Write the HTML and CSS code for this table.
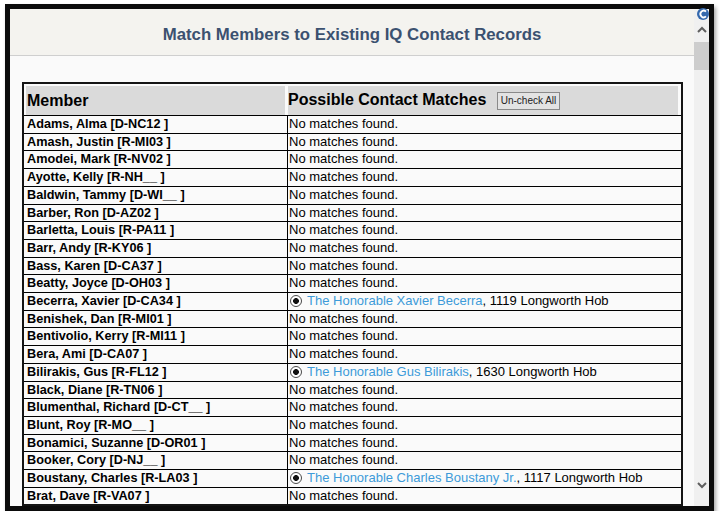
FILE: index.html
```html
<!DOCTYPE html>
<html>
<head>
<meta charset="utf-8">
<title>Match Members</title>
<link rel="stylesheet" href="styles.css">
</head>
<body>
<div class="dialog">
  <div class="viewport">
    <div class="content">
      <div class="dlg-header"><h1 class="dlg-title">Match Members to Existing IQ Contact Records</h1></div>
      <div class="dlg-body">
        <table class="matches">
          <colgroup><col class="col-member"><col class="col-match"></colgroup>
          <thead>
            <tr>
              <th class="th-member">Member</th>
              <th class="th-match">Possible Contact Matches <button class="uncheck">Un-check All</button></th>
            </tr>
          </thead>
          <tbody>
            <tr><td class="member">Adams, Alma [D-NC12 ]</td><td class="match">No matches found.</td></tr>
            <tr><td class="member">Amash, Justin [R-MI03 ]</td><td class="match">No matches found.</td></tr>
            <tr><td class="member">Amodei, Mark [R-NV02 ]</td><td class="match">No matches found.</td></tr>
            <tr><td class="member">Ayotte, Kelly [R-NH__ ]</td><td class="match">No matches found.</td></tr>
            <tr><td class="member">Baldwin, Tammy [D-WI__ ]</td><td class="match">No matches found.</td></tr>
            <tr><td class="member">Barber, Ron [D-AZ02 ]</td><td class="match">No matches found.</td></tr>
            <tr><td class="member">Barletta, Louis [R-PA11 ]</td><td class="match">No matches found.</td></tr>
            <tr><td class="member">Barr, Andy [R-KY06 ]</td><td class="match">No matches found.</td></tr>
            <tr><td class="member">Bass, Karen [D-CA37 ]</td><td class="match">No matches found.</td></tr>
            <tr><td class="member">Beatty, Joyce [D-OH03 ]</td><td class="match">No matches found.</td></tr>
            <tr><td class="member">Becerra, Xavier [D-CA34 ]</td><td class="match"><span class="radio"></span><a class="contact" href="#">The Honorable Xavier Becerra</a>, 1119 Longworth Hob</td></tr>
            <tr><td class="member">Benishek, Dan [R-MI01 ]</td><td class="match">No matches found.</td></tr>
            <tr><td class="member">Bentivolio, Kerry [R-MI11 ]</td><td class="match">No matches found.</td></tr>
            <tr><td class="member">Bera, Ami [D-CA07 ]</td><td class="match">No matches found.</td></tr>
            <tr><td class="member">Bilirakis, Gus [R-FL12 ]</td><td class="match"><span class="radio"></span><a class="contact" href="#">The Honorable Gus Bilirakis</a>, 1630 Longworth Hob</td></tr>
            <tr><td class="member">Black, Diane [R-TN06 ]</td><td class="match">No matches found.</td></tr>
            <tr><td class="member">Blumenthal, Richard [D-CT__ ]</td><td class="match">No matches found.</td></tr>
            <tr><td class="member">Blunt, Roy [R-MO__ ]</td><td class="match">No matches found.</td></tr>
            <tr><td class="member">Bonamici, Suzanne [D-OR01 ]</td><td class="match">No matches found.</td></tr>
            <tr><td class="member">Booker, Cory [D-NJ__ ]</td><td class="match">No matches found.</td></tr>
            <tr><td class="member">Boustany, Charles [R-LA03 ]</td><td class="match"><span class="radio"></span><a class="contact" href="#">The Honorable Charles Boustany Jr.</a>, 1117 Longworth Hob</td></tr>
            <tr><td class="member">Brat, Dave [R-VA07 ]</td><td class="match">No matches found.</td></tr>
          </tbody>
        </table>
      </div>
    </div>
    <div class="scrollbar">
      <div class="sb-btn sb-up"><svg width="10" height="7" viewBox="0 0 10 7"><polyline points="1,6 5,2 9,6" fill="none" stroke="#5f5f5f" stroke-width="2"/></svg></div>
      <div class="sb-track"><div class="sb-thumb"></div></div>
      <div class="sb-btn sb-down"><svg width="10" height="7" viewBox="0 0 10 7"><polyline points="1,1 5,5 9,1" fill="none" stroke="#5f5f5f" stroke-width="2"/></svg></div>
    </div>
  </div>
  <svg class="close-icon" width="14" height="14" viewBox="0 0 14 14"><circle cx="7" cy="7" r="6" fill="#3569ad"/><path d="M10 4.6 A3.3 3.3 0 1 0 10 9.4" fill="none" stroke="#ffffff" stroke-width="1.8"/></svg>
</div>
</body>
</html>
```

FILE: styles.css
```css
html, body {
  margin: 0;
  padding: 0;
  background: #ffffff;
}

.dialog {
  position: relative;
  box-sizing: border-box;
  width: 709px;
  height: 507px;
  margin: 4px 0 0 5px;
  border: 5px solid #0b0b0b;
  box-shadow: 2px 3px 4px rgba(0, 0, 0, 0.35);
  background: #fafafa;
}

.viewport {
  display: flex;
  height: 100%;
  overflow: hidden;
}

.content {
  flex: 1;
  min-width: 0;
  overflow: hidden;
  background: #fafafa;
}

.dlg-header {
  height: 46px;
  background: #f4f3ef;
  border-bottom: 1px solid #cfcfcf;
  display: flex;
  align-items: center;
  justify-content: center;
}

.dlg-title {
  margin: 5px 0 0 0;
  font-family: "Liberation Sans", Arial, sans-serif;
  font-size: 16.8px;
  font-weight: bold;
  color: #3b5170;
}

.dlg-body {
  padding: 26px 11px 0 12px;
}

.matches {
  width: 661px;
  table-layout: fixed;
  border-collapse: separate;
  border-spacing: 0;
  border: 2px solid #141414;
  background: #fafafa;
  font-family: "Liberation Sans", Arial, sans-serif;
  color: #000;
}

.col-member { width: 263px; }
.col-match { width: 394px; }

.matches th {
  height: 29px;
  padding: 0;
  background: #dadada;
  border-top: 2px solid #fafafa;
  text-align: left;
  font-size: 16px;
  font-weight: bold;
  white-space: nowrap;
  vertical-align: middle;
}

.th-member {
  border-left: 2px solid #fafafa;
  border-right: 2px solid #fafafa;
  padding-left: 1px !important;
}

.th-match {
  border-left: 1px solid #fafafa;
  border-right: 3px solid #fafafa;
}

.uncheck {
  margin-left: 6px;
  vertical-align: 1px;
  height: 18px;
  padding: 0 3px;
  font-family: "Liberation Sans", Arial, sans-serif;
  font-size: 10px;
  font-weight: normal;
  color: #222;
  background: #e3e3e3;
  border: 1px solid #8a8a8a;
  border-radius: 0;
}

.matches td {
  border-top: 1px solid #000;
  padding: 0;
  height: 16.7px;
  line-height: 16.7px;
  font-size: 13px;
  white-space: nowrap;
  overflow: hidden;
}

.member {
  font-weight: bold;
  font-size: 12.7px !important;
  padding-left: 3px !important;
}

.match {
  border-left: 1px solid #000;
  padding-left: 1px !important;
}

.radio {
  display: inline-block;
  box-sizing: border-box;
  width: 12px;
  height: 12px;
  margin: 0 5px 0 1px;
  vertical-align: -2px;
  border: 1px solid #4a4a4a;
  border-radius: 50%;
  background: radial-gradient(circle, #111 0, #111 2.6px, #fff 3.2px);
}

.contact {
  color: #3d9ad9;
  text-decoration: none;
}

.scrollbar {
  width: 15px;
  flex: none;
  display: flex;
  flex-direction: column;
  background: #f0f0f0;
}

.sb-btn {
  display: flex;
  justify-content: center;
  flex: none;
  box-sizing: border-box;
}

.sb-up {
  height: 33px;
  align-items: flex-end;
  padding-bottom: 9px;
}

.sb-down {
  height: 30px;
  align-items: flex-start;
  padding-top: 6px;
}

.sb-track {
  flex: 1;
}

.sb-thumb {
  height: 28px;
  background: #cdcdcd;
}

.close-icon {
  position: absolute;
  left: 686px;
  top: -2px;
}
```
